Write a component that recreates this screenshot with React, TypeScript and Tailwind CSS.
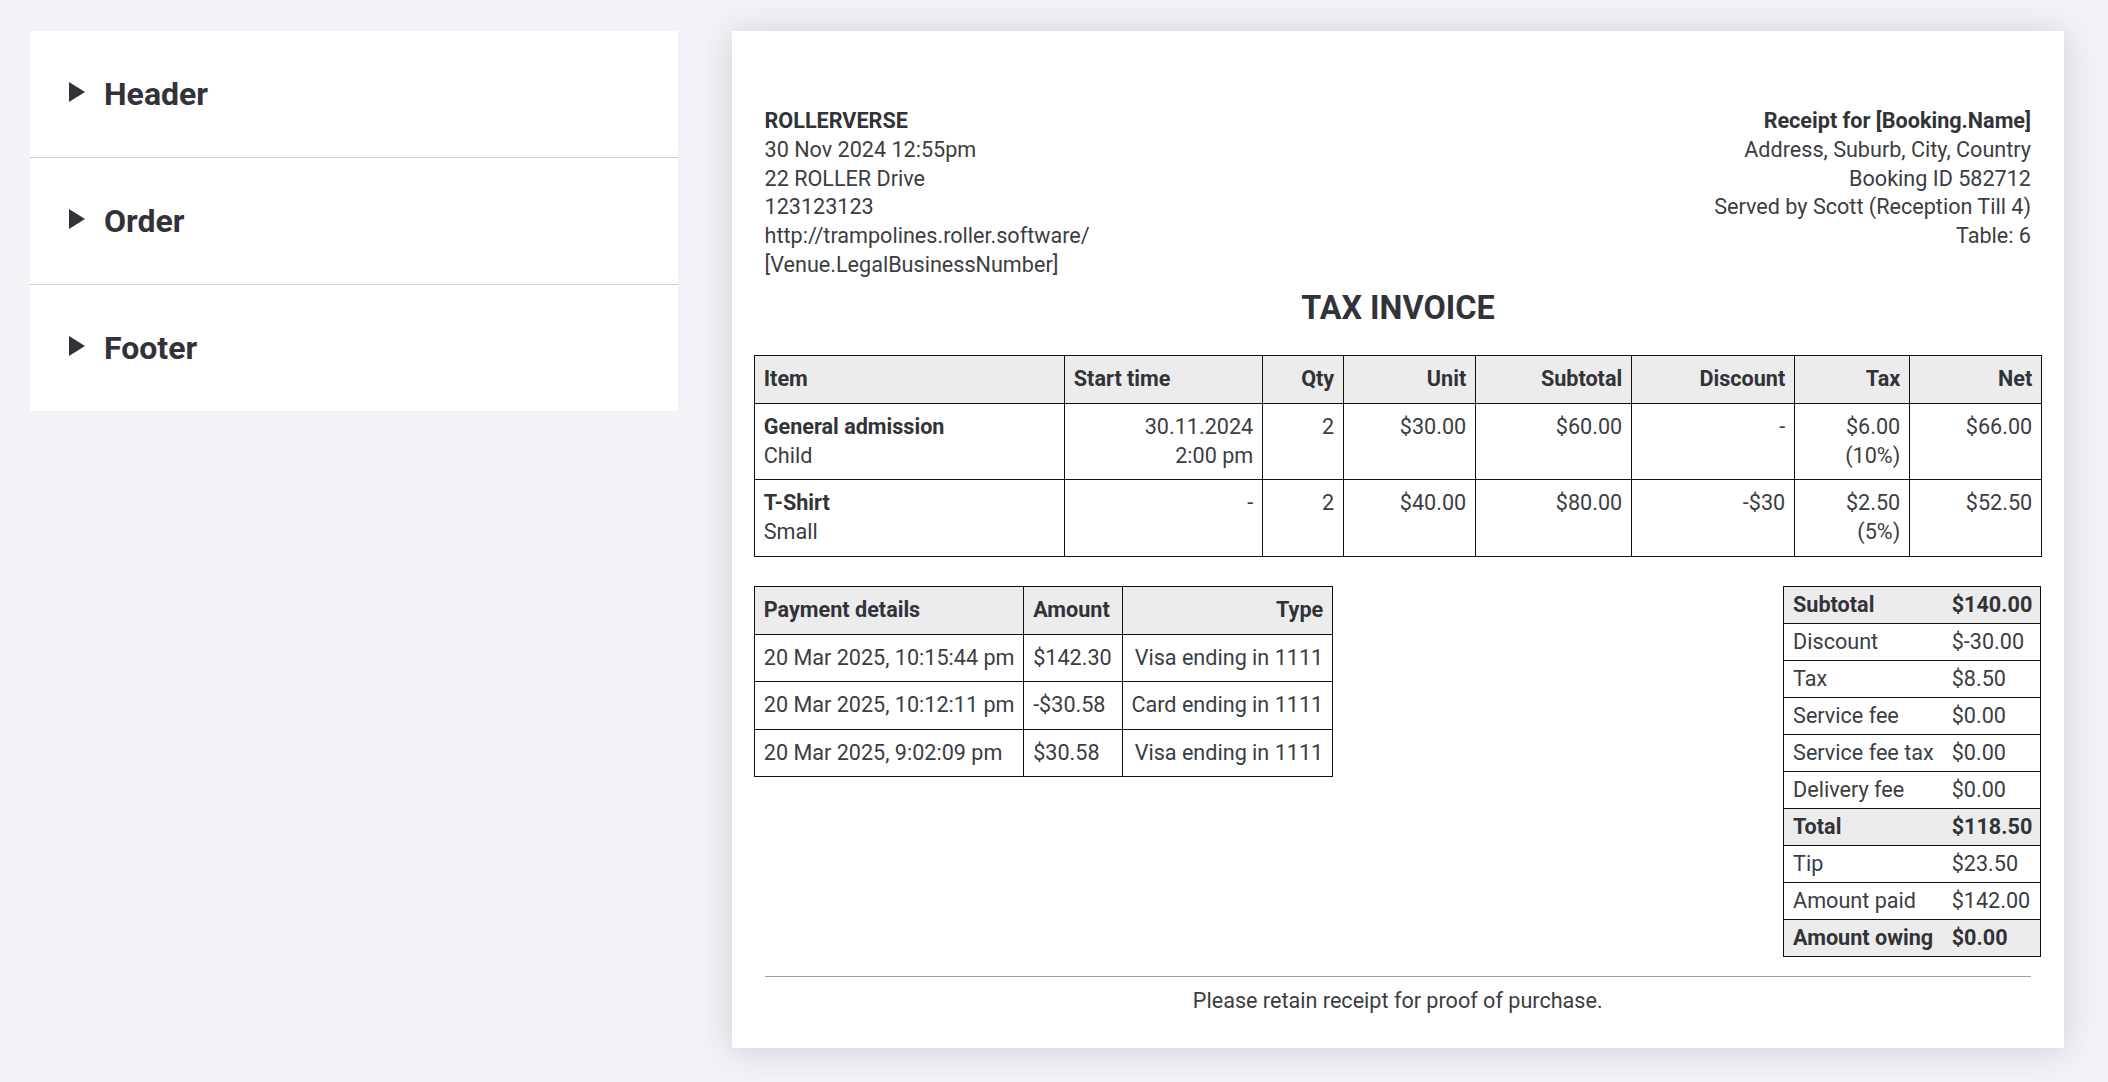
export default function App() {
  const th = "border border-[#111] bg-[#ececec] px-[8.8px] py-[9px] font-bold text-[#323338]";
  const td = "border border-[#111] px-[8.8px] pt-[9.3px] pb-[8.7px] align-top";
  const sections = ["Header", "Order", "Footer"];
  const items = [
    { name: "General admission", sub: "Child", start: ["30.11.2024", "2:00 pm"], qty: "2", unit: "$30.00", subtotal: "$60.00", discount: "-", tax: ["$6.00", "(10%)"], net: "$66.00" },
    { name: "T-Shirt", sub: "Small", start: ["-"], qty: "2", unit: "$40.00", subtotal: "$80.00", discount: "-$30", tax: ["$2.50", "(5%)"], net: "$52.50" },
  ];
  const payments = [
    ["20 Mar 2025, 10:15:44 pm", "$142.30", "Visa ending in 1111"],
    ["20 Mar 2025, 10:12:11 pm", "-$30.58", "Card ending in 1111"],
    ["20 Mar 2025, 9:02:09 pm", "$30.58", "Visa ending in 1111"],
  ];
  const totals: [string, string, boolean][] = [
    ["Subtotal", "$140.00", true],
    ["Discount", "$-30.00", false],
    ["Tax", "$8.50", false],
    ["Service fee", "$0.00", false],
    ["Service fee tax", "$0.00", false],
    ["Delivery fee", "$0.00", false],
    ["Total", "$118.50", true],
    ["Tip", "$23.50", false],
    ["Amount paid", "$142.00", false],
    ["Amount owing", "$0.00", true],
  ];
  return (
    <div className="min-h-screen bg-[#f1f3f8] pt-[31px] pl-[30px] pb-[33px] flex items-start gap-[54px] text-[#3c3d42] [font-family:Roboto,sans-serif] text-[21.6px] leading-[28.8px]">
      <aside className="w-[648px] bg-white flex flex-col">
        {sections.map((s, i) => (
          <div key={s} className={`flex items-center gap-[19px] pl-[39px] ${i < 2 ? "h-[127px] border-b border-[#cfd0d3]" : "h-[126px]"}`}>
            <svg width="16" height="20" viewBox="0 0 16 20" className="-mt-[4px]"><path d="M0 0L16 10L0 20Z" fill="#323338" /></svg>
            <span className="text-[32px] leading-[48px] font-bold text-[#323338]">{s}</span>
          </div>
        ))}
      </aside>
      <main className="w-[1332px] bg-white shadow-[0_2px_32px_rgba(50,51,70,0.18)] pt-[76px] pb-[33px] px-[22px]">
        <div className="flex justify-between pl-[10.5px] pr-[11px]">
          <div>
            <div className="font-bold text-[#323338]">ROLLERVERSE</div>
            <div>30 Nov 2024 12:55pm</div>
            <div>22 ROLLER Drive</div>
            <div>123123123</div>
            <div>http://trampolines.roller.software/</div>
            <div>[Venue.LegalBusinessNumber]</div>
          </div>
          <div className="text-right">
            <div className="font-bold text-[#323338]">Receipt for [Booking.Name]</div>
            <div>Address, Suburb, City, Country</div>
            <div>Booking ID 582712</div>
            <div>Served by Scott (Reception Till 4)</div>
            <div>Table: 6</div>
          </div>
        </div>
        <h1 className="mt-[4px] mb-[23px] text-center text-[32.4px] leading-[48px] font-bold text-[#323338]">TAX INVOICE</h1>
        <table className="w-[1287px] table-fixed border-collapse">
          <colgroup>
            <col className="w-[310px]" />
            <col className="w-[198px]" />
            <col className="w-[81px]" />
            <col className="w-[132px]" />
            <col className="w-[156px]" />
            <col className="w-[163px]" />
            <col className="w-[115px]" />
            <col className="w-[132px]" />
          </colgroup>
          <thead>
            <tr>
              <th className={`${th} text-left`}>Item</th>
              <th className={`${th} text-left`}>Start time</th>
              <th className={`${th} text-right`}>Qty</th>
              <th className={`${th} text-right`}>Unit</th>
              <th className={`${th} text-right`}>Subtotal</th>
              <th className={`${th} text-right`}>Discount</th>
              <th className={`${th} text-right`}>Tax</th>
              <th className={`${th} text-right`}>Net</th>
            </tr>
          </thead>
          <tbody>
            {items.map((it) => (
              <tr key={it.name}>
                <td className={td}><div className="font-bold text-[#323338]">{it.name}</div><div>{it.sub}</div></td>
                <td className={`${td} text-right`}>{it.start.map((l) => <div key={l}>{l}</div>)}</td>
                <td className={`${td} text-right`}>{it.qty}</td>
                <td className={`${td} text-right`}>{it.unit}</td>
                <td className={`${td} text-right`}>{it.subtotal}</td>
                <td className={`${td} text-right`}>{it.discount}</td>
                <td className={`${td} text-right`}>{it.tax.map((l) => <div key={l}>{l}</div>)}</td>
                <td className={`${td} text-right`}>{it.net}</td>
              </tr>
            ))}
          </tbody>
        </table>
        <div className="mt-[29.5px] w-[1287px] flex justify-between items-start">
          <table className="border-collapse">
            <thead>
              <tr>
                <th className={`${th} text-left`}>Payment details</th>
                <th className={`${th} text-left !pr-[10px]`}>Amount</th>
                <th className={`${th} text-right`}>Type</th>
              </tr>
            </thead>
            <tbody>
              {payments.map((p) => (
                <tr key={p[0]}>
                  <td className="border border-[#111] px-[8.8px] py-[8.8px]">{p[0]}</td>
                  <td className="border border-[#111] pl-[8.8px] pr-[10px] py-[8.8px]">{p[1]}</td>
                  <td className="border border-[#111] px-[8.8px] py-[8.8px] text-right">{p[2]}</td>
                </tr>
              ))}
            </tbody>
          </table>
          <table className="border-collapse">
            <tbody>
              {totals.map(([k, v, strong]) => (
                <tr key={k} className={strong ? "bg-[#ececec] font-bold text-[#323338]" : ""}>
                  <td className="border-y border-l border-[#111] pl-[9px] pr-[9px] py-[3.6px]">{k}</td>
                  <td className="border-y border-r border-[#111] pl-[9px] pr-[7.7px] py-[3.6px]">{v}</td>
                </tr>
              ))}
            </tbody>
          </table>
        </div>
        <div className="mt-[18.5px] ml-[10.5px] mr-[11px] border-t border-[#a0a0a0] pt-[10px] text-center">Please retain receipt for proof of purchase.</div>
      </main>
    </div>
  );
}
